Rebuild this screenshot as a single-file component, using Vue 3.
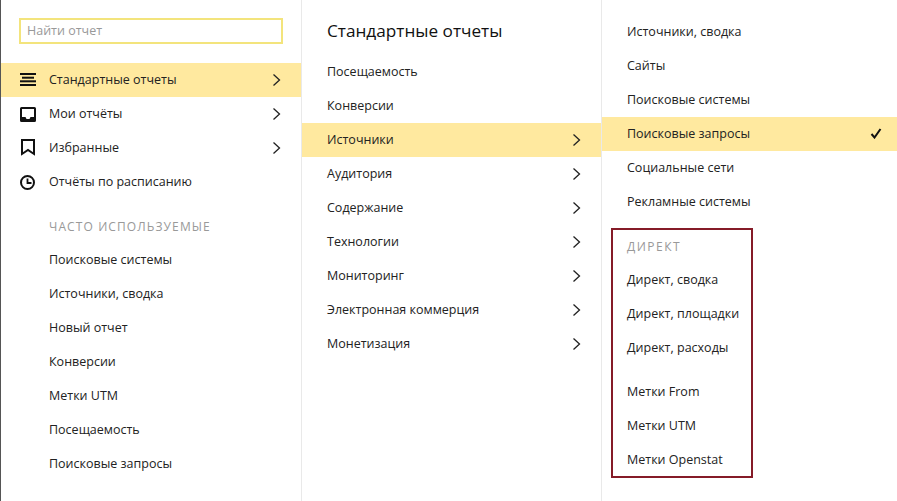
<template>
  <div class="page">
    <aside class="col col-main">
      <div class="search"><input class="search-input" placeholder="Найти отчет" /></div>
      <ul class="list">
        <li v-for="item in mainItems" :key="item.label" class="row" :class="{ active: item.active }">
          <svg class="icon" width="18" height="18" viewBox="0 0 18 18">
            <g v-if="item.icon === 'list'" fill="#111">
              <rect x="1" y="3" width="16" height="2" />
              <rect x="3" y="6.700" width="12" height="2" />
              <rect x="1" y="10.300" width="16" height="2" />
              <rect x="1" y="14" width="16" height="2" />
            </g>
            <path
              v-else-if="item.icon === 'inbox'"
              fill="#111"
              fill-rule="evenodd"
              d="M2.500 3h13A1.500 1.500 0 0 1 17 4.500v12a1.500 1.500 0 0 1-1.500 1.500h-13A1.500 1.500 0 0 1 1 16.500v-12A1.500 1.500 0 0 1 2.500 3zM3 5v8h3.500l1 2h3l1-2H15V5z"
            />
            <path v-else-if="item.icon === 'mark'" fill="none" stroke="#111" stroke-width="2" d="M3 2h12v14l-6-4-6 4z" />
            <g v-else fill="none" stroke="#111" stroke-width="2">
              <circle cx="8.500" cy="10.500" r="6.500" />
              <path d="M8.500 6.500V11h4" stroke-width="1.800" />
            </g>
          </svg>
          <span class="label">{{ item.label }}</span>
          <svg v-if="item.more" class="chev" width="9" height="14" viewBox="0 0 9 14"><path d="M1.500 1.500 7.500 7l-6 5.500" /></svg>
        </li>
        <li class="heading">ЧАСТО ИСПОЛЬЗУЕМЫЕ</li>
        <li v-for="label in frequent" :key="label" class="row"><span class="label">{{ label }}</span></li>
      </ul>
    </aside>

    <section class="col col-second">
      <h2 class="title">Стандартные отчеты</h2>
      <ul class="list">
        <li v-for="item in reports" :key="item.label" class="row" :class="{ active: item.active }">
          <span class="label">{{ item.label }}</span>
          <svg v-if="item.more" class="chev" width="9" height="14" viewBox="0 0 9 14"><path d="M1.500 1.500 7.500 7l-6 5.500" /></svg>
        </li>
      </ul>
    </section>

    <section class="col col-third">
      <ul class="list">
        <li v-for="item in sources" :key="item" class="row" :class="{ active: item === 'Поисковые запросы' }">
          <span class="label">{{ item }}</span>
          <svg v-if="item === 'Поисковые запросы'" class="check" width="12" height="11" viewBox="0 0 12 11"><path d="M1.500 6 4.500 9.500 10.500 1" /></svg>
        </li>
      </ul>
      <div class="direct">
        <div class="heading">ДИРЕКТ</div>
        <div v-for="item in direct" :key="item" class="row"><span class="label">{{ item }}</span></div>
        <div class="spacer"></div>
        <div v-for="item in tags" :key="item" class="row"><span class="label">{{ item }}</span></div>
      </div>
    </section>
  </div>
</template>

<script setup>
const mainItems = [
  { label: 'Стандартные отчеты', icon: 'list', more: true, active: true },
  { label: 'Мои отчёты', icon: 'inbox', more: true },
  { label: 'Избранные', icon: 'mark', more: true },
  { label: 'Отчёты по расписанию', icon: 'clock' }
]
const frequent = ['Поисковые системы', 'Источники, сводка', 'Новый отчет', 'Конверсии', 'Метки UTM', 'Посещаемость', 'Поисковые запросы']
const reports = [
  { label: 'Посещаемость' },
  { label: 'Конверсии' },
  { label: 'Источники', more: true, active: true },
  { label: 'Аудитория', more: true },
  { label: 'Содержание', more: true },
  { label: 'Технологии', more: true },
  { label: 'Мониторинг', more: true },
  { label: 'Электронная коммерция', more: true },
  { label: 'Монетизация', more: true }
]
const sources = ['Источники, сводка', 'Сайты', 'Поисковые системы', 'Поисковые запросы', 'Социальные сети', 'Рекламные системы']
const direct = ['Директ, сводка', 'Директ, площадки', 'Директ, расходы']
const tags = ['Метки From', 'Метки UTM', 'Метки Openstat']
</script>

<style>
html, body { margin: 0; background: #fff; }
</style>

<style scoped>
.page {
  display: flex;
  width: 897px;
  height: 501px;
  overflow: hidden;
  font-family: "Open Sans", "Noto Sans", sans-serif;
  font-size: 12.500px;
  color: #222;
}
.col { box-sizing: border-box; height: 100%; }
.col-main { width: 302px; border-left: 1px solid #555; border-right: 1px solid #e9e9e9; padding-top: 18px; }
.col-second { width: 300px; border-right: 1px solid #e9e9e9; padding-top: 18px; }
.col-third { width: 295px; padding-top: 15px; }
.list { list-style: none; margin: 0; padding: 0; }
.search { padding: 0 18px; margin-bottom: 19px; }
.search-input {
  display: block;
  box-sizing: border-box;
  width: 264px;
  height: 26px;
  padding: 0 6px 2px;
  border: 2px solid #f3e47c;
  outline: none;
  font: inherit;
}
.search-input::placeholder { color: #999; opacity: 1; }
.row {
  display: flex;
  align-items: center;
  box-sizing: border-box;
  height: 34px;
  padding-left: 25px;
  padding-right: 20px;
}
.row.active { background: #ffe99f; }
.col-main .row { padding-left: 48px; }
.col-main .row:has(.icon) { padding-left: 18px; padding-bottom: 2px; }
.col-second .row { padding-bottom: 2px; }
.col-third .list .row { padding-bottom: 2px; padding-right: 15px; }
.icon { flex: none; margin-right: 12px; }
.label { flex: 1; white-space: nowrap; }
.chev { flex: none; margin-top: 2px; fill: none; stroke: #222; stroke-width: 1.300; }
.check { flex: none; fill: none; stroke: #111; stroke-width: 2; }
.heading { color: #999; font-size: 12px; letter-spacing: 1.100px; }
.col-main .heading { padding: 20px 0 7px 48px; line-height: 16px; }
.title { margin: 0 0 11px 25px; font-size: 17.200px; line-height: 26px; font-weight: 400; color: #111; }
.direct {
  box-sizing: border-box;
  width: 142px;
  height: 250px;
  margin: 9px 0 0 9px;
  border: 2px solid #851b28;
}
.direct .row { padding-left: 14px; padding-right: 0; }
.direct .heading { padding: 9px 0 0 14px; line-height: 16px; margin-bottom: 7px; letter-spacing: 1.500px; }
.spacer { height: 10px; }
</style>
